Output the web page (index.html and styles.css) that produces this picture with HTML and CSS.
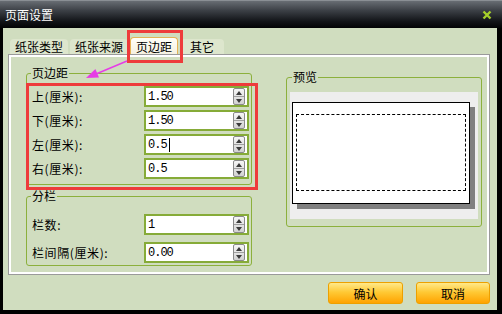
FILE: index.html
```html
<!DOCTYPE html><html><head><meta charset="utf-8">
<title>页面设置</title>
<link rel="stylesheet" href="styles.css">
</head>
<body>

<div id="win">
	<div class="titlebar">
		<span class="title">页面设置</span>
		<svg class="close" width="10" height="10" viewBox="0 0 10 10"><path d="M1.5 1.5 L8.5 8.5 M8.5 1.5 L1.5 8.5" stroke="#a6cf2a" stroke-width="2.4" fill="none"/></svg>
	</div>
	<div class="client">
		<div class="tabs">
			<div class="tab">纸张类型</div>
			<div class="tab">纸张来源</div>
			<div class="tab on">页边距</div>
			<div class="tab last">其它</div>
		</div>
		<div class="panel">
			<div class="col">
				<fieldset class="grp margins">
					<legend>页边距</legend>
					<div class="row"><label>上(厘米):</label><div class="spin"><span class="val">1.50</span><span class="btn"><i class="up"></i><i class="dn"></i></span></div></div>
					<div class="row"><label>下(厘米):</label><div class="spin"><span class="val">1.50</span><span class="btn"><i class="up"></i><i class="dn"></i></span></div></div>
					<div class="row"><label>左(厘米):</label><div class="spin"><span class="val">0.5<span class="caret"></span></span><span class="btn"><i class="up"></i><i class="dn"></i></span></div></div>
					<div class="row"><label>右(厘米):</label><div class="spin"><span class="val">0.5</span><span class="btn"><i class="up"></i><i class="dn"></i></span></div></div>
				</fieldset>
				<fieldset class="grp columns">
					<legend>分栏</legend>
					<div class="row"><label>栏数:</label><div class="spin"><span class="val">1</span><span class="btn"><i class="up"></i><i class="dn"></i></span></div></div>
					<div class="row"><label>栏间隔(厘米):</label><div class="spin"><span class="val">0.00</span><span class="btn"><i class="up"></i><i class="dn"></i></span></div></div>
				</fieldset>
			</div>
			<fieldset class="grp preview">
				<legend>预览</legend>
				<div class="paper">
					<div class="page"><div class="area"></div></div>
				</div>
			</fieldset>
		</div>
		<div class="buttons">
			<button class="ok">确认</button>
			<button class="cancel">取消</button>
		</div>
	</div>

	<!-- annotations -->
	<div class="mark tabmark"></div>
	<div class="mark boxmark"></div>
	<svg class="arrow" width="502" height="314" viewBox="0 0 502 314">
		<line x1="127" y1="61" x2="96" y2="74" stroke="#e63de6" stroke-width="1.6"/>
		<polygon points="86,78 99,77.6 95.4,69" fill="#e63de6"/>
	</svg>
</div>

</body>
</html>
```

FILE: styles.css
```css
body {
	margin: 0;
	background: #000;
	font-family: "Noto Sans CJK SC", "Noto Sans", sans-serif;
	font-size: 12px;
	color: #000;
}
#win {
	position: relative;
	width: 502px;
	height: 314px;
	background: #000;
	display: flex;
	flex-direction: column;
}
.titlebar {
	height: 28px;
	box-sizing: border-box;
	display: flex;
	align-items: center;
	justify-content: space-between;
	padding: 0 10px 0 5px;
	border-top: 1px solid #8a8f94;
	background: linear-gradient(#686d73, #3c4046 35%, #121418 75%, #020304);
	color: #fff;
}
.title {
	font-size: 12px;
	line-height: 14px;
}
.client {
	flex: 1;
	margin: 0 5px 4px 3px;
	background: #d0ddbf;
}

/* tabs */
.tabs {
	height: 26px;
	box-sizing: border-box;
	display: flex;
	align-items: flex-end;
	gap: 2px;
	padding: 0 0 0 7px;
}
.tab {
	height: 15px;
	line-height: 15px;
	padding: 0 5px;
	background: #dde6cd;
	border-radius: 4px 4px 0 0;
}
.tab.on {
	height: 16px;
	line-height: 17px;
	border: 1px solid #e5b354;
	border-bottom: none;
	background: linear-gradient(#fffef8, #f5f1e1);
}
.tab.last {
	padding: 0 10px;
}

/* panel */
.panel {
	height: 221px;
	box-sizing: border-box;
	margin: 0 7px 0 5px;
	border: 1px solid #9a9a9a;
	box-shadow: inset 0 0 0 2px #fff;
	display: flex;
	gap: 34px;
	padding: 10px 7px 0 17px;
}
.col {
	width: 226px;
}
.grp {
	margin: 0;
	padding: 0 2px 0 5px;
	border: 1px solid #8cb03c;
	border-radius: 3px;
	min-width: 0;
}
.grp legend {
	padding: 0 1px;
	margin-left: -1px;
	line-height: 16px;
}
.margins {
	display: grid;
	row-gap: 3px;
	padding-top: 5px;
	padding-bottom: 5px;
}
.columns {
	display: grid;
	row-gap: 7px;
	margin-top: 3px;
	padding-top: 10px;
	padding-bottom: 2px;
}
.row {
	height: 21px;
	display: flex;
	align-items: center;
	justify-content: space-between;
}
.row label {
	letter-spacing: 0.6px;
}
.spin {
	width: 105px;
	height: 21px;
	box-sizing: border-box;
	border: 2px solid #86ab38;
	background: #fff;
	display: flex;
	align-items: center;
	justify-content: space-between;
	padding: 0 2px 0 1px;
}
.val {
	font-family: "Liberation Mono", monospace;
	font-size: 12px;
	letter-spacing: -1px;
	line-height: 14px;
	display: flex;
	align-items: center;
	padding-left: 1px;
}
.caret {
	display: inline-block;
	width: 1px;
	height: 14px;
	background: #000;
	margin-left: 2px;
}
.btn {
	width: 12px;
	height: 17px;
	box-sizing: border-box;
	border: 1px solid #8a8a8a;
	border-radius: 2px;
	background: linear-gradient(#f6f6f6, #d2d2d2);
	display: flex;
	flex-direction: column;
}
.btn i {
	flex: 1;
	display: flex;
	align-items: center;
	justify-content: center;
}
.btn .up {
	border-bottom: 1px solid #a0a0a0;
}
.btn i::after {
	content: "";
	border-left: 3px solid transparent;
	border-right: 3px solid transparent;
}
.btn .up::after {
	border-bottom: 4px solid #3a3a3a;
}
.btn .dn::after {
	border-top: 4px solid #3a3a3a;
}

/* preview */
.preview {
	width: 196px;
	box-sizing: border-box;
	align-self: flex-start;
	margin-top: 4px;
	padding: 7px 3px 7px 3px;
}
.preview legend {
	margin-left: 2px;
}
.paper {
	height: 127px;
	box-sizing: border-box;
	background: #eeeeee;
	padding: 10px 0 0 2px;
}
.page {
	width: 178px;
	height: 102px;
	box-sizing: border-box;
	border: 1px solid #000;
	background: #fff;
	box-shadow: 5px 5px 0 #808080;
	padding: 11px 3px 0 3px;
}
.area {
	height: 77px;
	box-sizing: border-box;
	border: 1px dashed #000;
}

/* buttons */
.buttons {
	display: flex;
	justify-content: flex-end;
	gap: 13px;
	padding: 7px 7px 0 0;
}
.buttons button {
	width: 75px;
	height: 22px;
	padding: 0;
	border: 1px solid #eda000;
	border-radius: 3px;
	background: linear-gradient(#ffe98a, #ffc935 45%, #ffa300);
	font-family: "Noto Sans CJK SC", sans-serif;
	font-size: 12px;
	color: #000;
}
.buttons .cancel {
	width: 74px;
}

/* annotations over the dialog */
.mark {
	position: absolute;
	box-sizing: border-box;
	border: 3px solid #ee3b3b;
}
.tabmark {
	left: 127px;
	top: 30px;
	width: 56px;
	height: 33px;
}
.boxmark {
	left: 26px;
	top: 83px;
	width: 232px;
	height: 107px;
}
.arrow {
	position: absolute;
	left: 0;
	top: 0;
	pointer-events: none;
}
```
